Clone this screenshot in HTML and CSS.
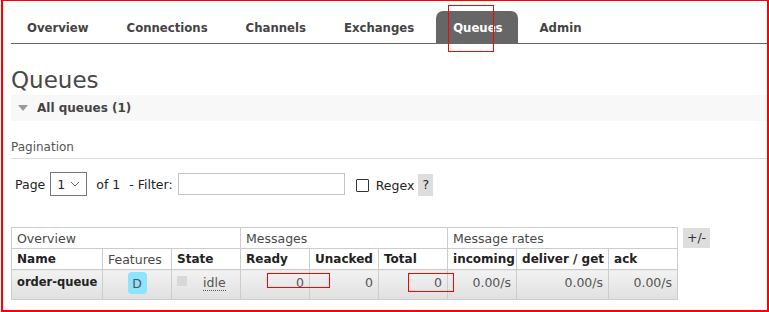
FILE: index.html
```html
<!DOCTYPE html>
<html lang="en">
<head>
    <meta charset="UTF-8">
    <title>RabbitMQ Management - Queues</title>
    <link rel="stylesheet" href="styles.css">
</head>
<body>

<div class="page">
    <ul class="menu">
        <li><a href="#">Overview</a></li>
        <li><a href="#">Connections</a></li>
        <li><a href="#">Channels</a></li>
        <li><a href="#">Exchanges</a></li>
        <li class="selected"><a href="#">Queues</a></li>
        <li><a href="#">Admin</a></li>
    </ul>

    <h1>Queues</h1>

    <div class="section-title"><span class="arrow"></span>All queues (1)</div>

    <h3 class="pagination">Pagination</h3>

    <div class="filter-row">
        <span>Page</span>
        <span class="select-box">1<svg width="10" height="6" viewBox="0 0 10 6"><path d="M1 1 L5 5 L9 1" fill="none" stroke="#666" stroke-width="1"/></svg></span>
        <span class="of">of 1</span>
        <span class="filter-label">- Filter:</span>
        <span class="text-input"></span>
        <span class="checkbox"></span>
        <span class="regex">Regex</span>
        <span class="help">?</span>
    </div>

    <div class="table-wrap">
        <table class="list">
            <colgroup>
                <col style="width: 91px">
                <col style="width: 69px">
                <col style="width: 69px">
                <col style="width: 69px">
                <col style="width: 69px">
                <col style="width: 69px">
                <col style="width: 69px">
                <col style="width: 92px">
                <col style="width: 69px">
            </colgroup>
            <thead>
                <tr class="group">
                    <th colspan="3">Overview</th>
                    <th colspan="3">Messages</th>
                    <th colspan="3">Message rates</th>
                </tr>
                <tr class="cols">
                    <th>Name</th>
                    <th class="plain">Features</th>
                    <th>State</th>
                    <th>Ready</th>
                    <th>Unacked</th>
                    <th>Total</th>
                    <th>incoming</th>
                    <th>deliver / get</th>
                    <th>ack</th>
                </tr>
            </thead>
            <tbody>
                <tr>
                    <td class="name">order-queue</td>
                    <td class="center"><span class="badge">D</span></td>
                    <td><span class="state"><span class="square"></span><abbr>idle</abbr></span></td>
                    <td class="num">0</td>
                    <td class="num">0</td>
                    <td class="num">0</td>
                    <td class="num">0.00/s</td>
                    <td class="num">0.00/s</td>
                    <td class="num">0.00/s</td>
                </tr>
            </tbody>
        </table>
        <span class="toggle">+/-</span>
    </div>
</div>

<!-- annotations drawn over the screenshot -->
<div class="mark frame"></div>
<div class="mark mark-tab"></div>
<div class="mark mark-ready"></div>
<div class="mark mark-total"></div>

</body>
</html>
```

FILE: styles.css
```css
body {
    margin: 0;
    font-family: 'DejaVu Sans', Verdana, sans-serif;
    font-size: 12px;
    color: #484848;
    background-color: #fff;
}

.page {
    padding-left: 11px;
}

.menu {
    list-style: none;
    margin: 0;
    padding: 11px 0 0 0;
    display: flex;
    border-bottom: 1px solid #666;
}

.menu li {
    margin-right: 6px;
}

.menu a {
    display: block;
    height: 32px;
    line-height: 35px;
    padding: 0 16px;
    font-weight: bold;
    font-size: 11.7px;
    color: #444;
    text-decoration: none;
    border-radius: 7px 7px 0 0;
}

.menu .selected a {
    background-color: #666;
    color: #fff;
    padding: 0 15px 0 17px;
}

h1 {
    margin: 0;
    padding-top: 21px;
    font-size: 23px;
    font-weight: normal;
    line-height: 30px;
    color: #484848;
}

.section-title {
    display: flex;
    align-items: center;
    height: 26px;
    background-color: #f8f8f8;
    font-weight: bold;
    font-size: 12px;
    color: #444;
}

.arrow {
    width: 0;
    height: 0;
    border-left: 5px solid transparent;
    border-right: 5px solid transparent;
    border-top: 6px solid #999;
    margin: 0 9px 0 7px;
}

.pagination {
    margin: 19px 0 0 0;
    padding-bottom: 4px;
    font-size: 12px;
    font-weight: normal;
    color: #555;
    border-bottom: 1px solid #ddd;
}

.filter-row {
    display: flex;
    align-items: center;
    padding: 13px 0 0 4px;
    height: 24px;
    font-size: 12.5px;
    color: #222;
}

.select-box {
    display: flex;
    align-items: center;
    justify-content: space-between;
    box-sizing: border-box;
    width: 37px;
    height: 24px;
    margin-left: 5px;
    padding: 0 6px 0 6px;
    border: 1px solid #767676;
    color: #222;
}

.of {
    margin-left: 9px;
}

.filter-label {
    margin-left: 9px;
}

.text-input {
    box-sizing: border-box;
    width: 167px;
    height: 22px;
    margin-left: 5px;
    border: 1px solid #c4c4c4;
}

.checkbox {
    box-sizing: border-box;
    width: 13px;
    height: 13px;
    margin-left: 11px;
    margin-top: 3px;
    border: 1px solid #333;
    border-radius: 1px;
}

.regex {
    margin-left: 7px;
    margin-top: 3px;
}

.help {
    box-sizing: border-box;
    width: 15px;
    height: 22px;
    margin-left: 4px;
    line-height: 22px;
    text-align: center;
    background-color: #ddd;
    margin-top: 1px;
}

.table-wrap {
    display: flex;
    align-items: flex-start;
    margin-top: 31px;
}

.list {
    border-collapse: collapse;
    table-layout: fixed;
    width: 667px;
    font-size: 12px;
}

.list th,
.list td {
    border: 1px solid #ccc;
    padding: 0 5px;
    text-align: left;
    white-space: nowrap;
    overflow: hidden;
}

.list .group th {
    height: 20px;
    font-weight: normal;
    font-size: 12.5px;
    color: #484848;
}

.list .cols th {
    height: 20px;
    font-weight: bold;
    color: #222;
}

.list .cols th.plain {
    font-weight: normal;
    font-size: 12.5px;
    color: #484848;
}

.list td {
    height: 30px;
    vertical-align: top;
    padding-top: 5px;
    box-sizing: border-box;
    background: linear-gradient(#f2f2f2, #e0e0e0);
    color: #555;
    font-size: 12.5px;
}

.list td.name {
    font-weight: bold;
    font-size: 11.5px;
    color: #222;
}

.list td.center {
    text-align: center;
    padding-top: 2px;
}

.list td.num {
    text-align: right;
}

.badge {
    display: inline-block;
    width: 19px;
    height: 22px;
    line-height: 23px;
    border-radius: 4px;
    background-color: #8de4fc;
    color: #555;
    text-align: center;
}

.state {
    display: flex;
    align-items: flex-start;
}

.square {
    width: 10px;
    height: 10px;
    margin-top: 1px;
    background-color: #d8d8d8;
}

.state abbr {
    margin-left: 16px;
    text-decoration: none;
    border-bottom: 1px dotted #555;
    line-height: 15px;
}

.toggle {
    display: block;
    width: 27px;
    height: 20px;
    line-height: 20px;
    margin: 1px 0 0 5px;
    text-align: center;
    background-color: #ddd;
    color: #333;
    font-size: 12.5px;
}

.mark {
    position: absolute;
    border: 1px solid #ff0000;
    box-sizing: border-box;
}

.frame {
    left: 1px;
    top: 0;
    width: 768px;
    height: 312px;
    border-width: 1px 2px 2px 2px;
}

.mark-tab {
    left: 448px;
    top: 5px;
    width: 46px;
    height: 47px;
}

.mark-ready {
    left: 267px;
    top: 273px;
    width: 63px;
    height: 15px;
}

.mark-total {
    left: 408px;
    top: 273px;
    width: 46px;
    height: 19px;
}
```
